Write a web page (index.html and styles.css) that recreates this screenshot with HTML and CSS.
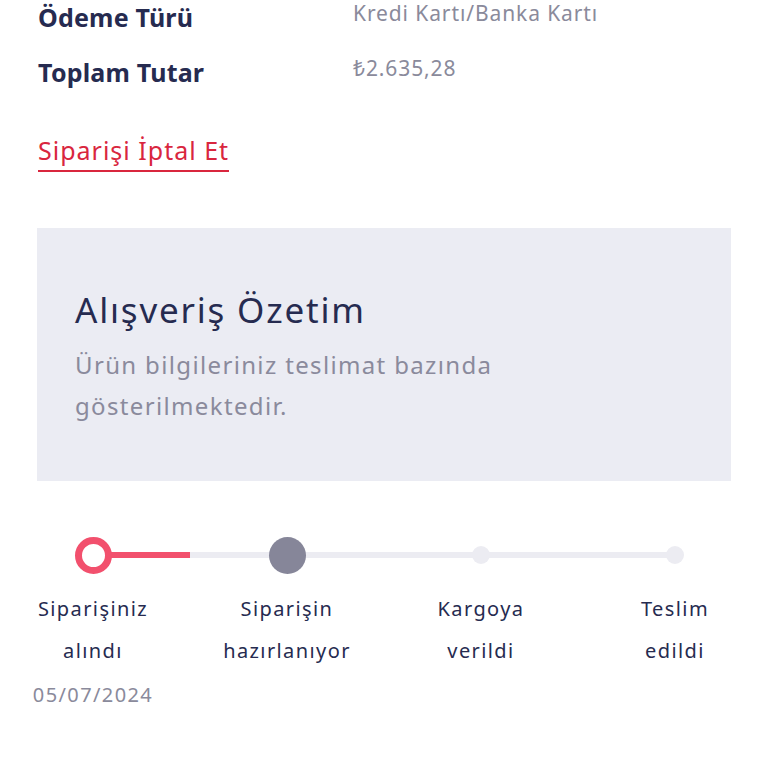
FILE: index.html
```html
<!DOCTYPE html>
<html lang="tr">
<head>
<meta charset="utf-8">
<link rel="stylesheet" href="styles.css">
</head>
<body>
<div class="page">
  <div class="info">
    <div class="row">
      <div class="label">Ödeme Türü</div>
      <div class="value">Kredi Kartı/Banka Kartı</div>
    </div>
    <div class="row">
      <div class="label">Toplam Tutar</div>
      <div class="value">₺2.635,28</div>
    </div>
  </div>
  <div class="cancel-wrap"><a class="cancel">Siparişi İptal Et</a></div>
  <div class="summary">
    <h2 class="summary-title">Alışveriş Özetim</h2>
    <p class="summary-text">Ürün bilgileriniz teslimat bazında gösterilmektedir.</p>
  </div>
  <div class="stepper">
    <div class="track">
      <div class="track-fill"></div>
    </div>
    <div class="step">
      <div class="dot-area"><span class="dot dot-done"></span></div>
      <div class="step-label">Siparişiniz<br>alındı</div>
      <div class="step-date">05/07/2024</div>
    </div>
    <div class="step">
      <div class="dot-area"><span class="dot dot-current"></span></div>
      <div class="step-label">Siparişin<br>hazırlanıyor</div>
    </div>
    <div class="step">
      <div class="dot-area"><span class="dot dot-next"></span></div>
      <div class="step-label">Kargoya<br>verildi</div>
    </div>
    <div class="step">
      <div class="dot-area"><span class="dot dot-next"></span></div>
      <div class="step-label">Teslim<br>edildi</div>
    </div>
  </div>
</div>
</body>
</html>
```
FILE: styles.css
```css
html, body { margin: 0; padding: 0; background: #fff; }
body { font-family: "Noto Sans", "Open Sans", sans-serif; color: #262b50; }
.page { width: 768px; height: 768px; overflow: hidden; }
.info { padding: 0 0 0 38px; }
.row { display: flex; height: 55px; align-items: flex-start; }
.label { width: 315px; font-weight: 700; font-size: 25px; line-height: 34px; letter-spacing: 0.2px; color: #262b50; }
.value { font-size: 21px; line-height: 26px; letter-spacing: 0.9px; color: #8a8a9b; }
.cancel-wrap { padding: 25px 0 0 38px; height: 96px; box-sizing: border-box; }
.cancel { display: inline-block; font-size: 25px; line-height: 30px; letter-spacing: 1px; color: #d9263e; border-bottom: 2px solid #d9263e; padding-bottom: 5px; }
.summary { margin: 22px 37px 0 37px; background: #ebecf3; height: 253px; box-sizing: border-box; padding: 62px 38px 0 38px; }
.summary-title { margin: 0; font-weight: 400; font-size: 35px; line-height: 40px; letter-spacing: 1.8px; color: #262b50; }
.summary-text { margin: 14px 0 0 0; width: 480px; font-size: 24px; line-height: 41px; letter-spacing: 1.35px; color: #8a8a9c; }
.stepper { position: relative; display: grid; grid-template-columns: repeat(4, 194px); margin: 37px 0 0 -4px; }
.track { position: absolute; left: 97px; width: 582px; top: 34px; height: 6px; background: #ececf2; border-radius: 3px; }
.track-fill { width: 97px; height: 6px; background: #f2506d; }
.step { display: flex; flex-direction: column; align-items: center; position: relative; }
.dot-area { height: 74px; margin-bottom: -4px; display: flex; align-items: center; justify-content: center; }
.dot { display: block; border-radius: 50%; box-sizing: border-box; }
.dot-done { width: 37px; height: 37px; border: 7px solid #f2506d; background: #fff; }
.dot-current { width: 37px; height: 37px; background: #868699; }
.dot-next { width: 18px; height: 18px; background: #ececf2; }
.step-label { font-size: 20px; line-height: 42px; letter-spacing: 1.4px; text-align: center; color: #262b50; }
.step-date { font-size: 20px; line-height: 28px; letter-spacing: 1.4px; color: #8a8a9b; margin-top: 9px; }
```
